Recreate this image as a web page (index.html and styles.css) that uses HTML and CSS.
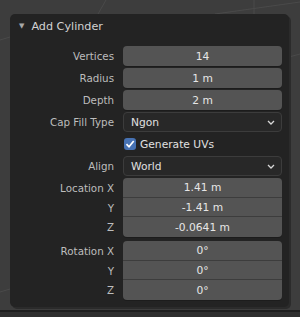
FILE: index.html
```html
<!DOCTYPE html>
<html lang="en">
<head>
    <meta charset="UTF-8">
    <title>Add Cylinder</title>
    <link rel="stylesheet" href="styles.css">
</head>
<body>
    <svg class="grid" width="300" height="317">
        <line x1="106" y1="0" x2="98" y2="14" />
        <line x1="254" y1="0" x2="254" y2="14" />
        <line x1="215" y1="14" x2="300" y2="2" />
        <line x1="0" y1="40" x2="10" y2="37" />
        <line x1="289" y1="57" x2="300" y2="54" />
        <line x1="0" y1="292" x2="10" y2="289" />
    </svg>

    <div class="panel">
        <div class="panel-head">
            <span class="arrow">&#9660;</span>
            <span>Add Cylinder</span>
        </div>

        <div class="props">
            <div class="row">
                <label>Vertices</label>
                <div class="field">14</div>
            </div>
            <div class="row">
                <label>Radius</label>
                <div class="field">1 m</div>
            </div>
            <div class="row">
                <label>Depth</label>
                <div class="field">2 m</div>
            </div>
            <div class="row">
                <label>Cap Fill Type</label>
                <div class="menu">Ngon
                    <svg class="chev" width="8" height="5" viewBox="0 0 8 5"><path d="M1 1 L4 4 L7 1" /></svg>
                </div>
            </div>
            <div class="row">
                <label></label>
                <div class="check">
                    <span class="box">
                        <svg width="12" height="12" viewBox="0 0 12 12"><path d="M2.5 6.2 L5 8.8 L9.7 3" /></svg>
                    </span>
                    Generate UVs
                </div>
            </div>
            <div class="row">
                <label>Align</label>
                <div class="menu">World
                    <svg class="chev" width="8" height="5" viewBox="0 0 8 5"><path d="M1 1 L4 4 L7 1" /></svg>
                </div>
            </div>

            <div class="group">
                <div class="row">
                    <label>Location X</label>
                    <div class="field top">1.41 m</div>
                </div>
                <div class="row">
                    <label>Y</label>
                    <div class="field mid">-1.41 m</div>
                </div>
                <div class="row">
                    <label>Z</label>
                    <div class="field bottom">-0.0641 m</div>
                </div>
            </div>

            <div class="group">
                <div class="row">
                    <label>Rotation X</label>
                    <div class="field top">0°</div>
                </div>
                <div class="row">
                    <label>Y</label>
                    <div class="field mid">0°</div>
                </div>
                <div class="row">
                    <label>Z</label>
                    <div class="field bottom">0°</div>
                </div>
            </div>
        </div>
    </div>

    <div class="footer"></div>
</body>
</html>
```

FILE: styles.css
```css
body {
    margin: 0;
    width: 300px;
    height: 317px;
    background-color: #3d3d3d;
    font-family: "DejaVu Sans", sans-serif;
    position: relative;
    overflow: hidden;
}

.grid {
    position: absolute;
    left: 0;
    top: 0;
}

.grid line {
    stroke: #4a4a4a;
    stroke-width: 1;
}

.panel {
    position: relative;
    margin: 14px 0 0 10px;
    width: 279px;
    height: 293px;
    background-color: #232323;
    border-radius: 5px;
    box-shadow: 2px 2px 0 #2b2b2b;
    box-sizing: border-box;
}

.panel-head {
    height: 32px;
    box-sizing: border-box;
    display: flex;
    align-items: center;
    color: #d2d2d2;
    font-size: 11.2px;
    line-height: 13px;
    padding: 6px 0 0 9px;
    align-items: flex-start;
}

.arrow {
    font-size: 7px;
    color: #a8a8a8;
    margin-right: 7px;
}

.props {
    display: flex;
    flex-direction: column;
    gap: 2px;
    padding-right: 7px;
}

.row {
    display: grid;
    grid-template-columns: 104px 1fr;
    column-gap: 9px;
    height: 20px;
    align-items: center;
}

.row label {
    text-align: right;
    color: #bdbdbd;
    font-size: 10.3px;
}

.field {
    height: 100%;
    background-color: #545454;
    color: #e6e6e6;
    font-size: 10.7px;
    border-radius: 4px;
    display: flex;
    align-items: center;
    justify-content: center;
    box-shadow: 0 1px 0 #1c1c1c;
}

.menu {
    height: 100%;
    box-sizing: border-box;
    background-color: #282828;
    border: 1px solid #3c3c3c;
    border-radius: 4px;
    color: #e0e0e0;
    font-size: 10.7px;
    display: flex;
    align-items: center;
    padding-left: 7px;
    position: relative;
}

.chev {
    position: absolute;
    right: 6px;
    top: 7px;
}

.chev path {
    fill: none;
    stroke: #d8d8d8;
    stroke-width: 1.3;
}

.check {
    display: flex;
    align-items: center;
    color: #e0e0e0;
    font-size: 10.7px;
    padding-left: 1px;
}

.box {
    width: 12px;
    height: 12px;
    background-color: #4772b3;
    border-radius: 3px;
    margin-right: 4px;
    display: flex;
}

.box path {
    fill: none;
    stroke: #ffffff;
    stroke-width: 1.7;
}

.group {
    display: flex;
    flex-direction: column;
}

.group + .group {
    margin-top: 2px;
}

.group .row {
    height: 19.7px;
}

.group .field {
    border-radius: 0;
    box-shadow: none;
    border-bottom: 1px solid #3d3d3d;
    box-sizing: border-box;
}

.group .field.top {
    border-radius: 4px 4px 0 0;
}

.group .field.bottom {
    border-radius: 0 0 4px 4px;
    border-bottom: none;
    box-shadow: 0 1px 0 #1c1c1c;
}

.footer {
    position: absolute;
    left: 0;
    bottom: 0;
    width: 300px;
    height: 5px;
    background-color: #2e2e2e;
    border-top: 2px solid #1e1e1e;
}
```
